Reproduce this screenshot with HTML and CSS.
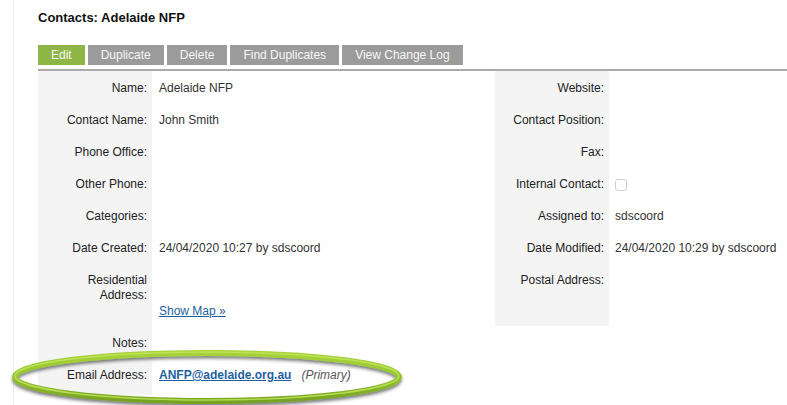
FILE: index.html
```html
<!DOCTYPE html>
<html lang="en">
<head>
<meta charset="utf-8">
<title>Contacts: Adelaide NFP</title>
<link rel="stylesheet" href="styles.css">
</head>
<body>
<div class="page">
  <div class="frame">
    <h1 class="title">Contacts: Adelaide NFP</h1>
    <div class="toolbar">
      <span class="btn btn-edit">Edit</span>
      <span class="btn">Duplicate</span>
      <span class="btn">Delete</span>
      <span class="btn">Find Duplicates</span>
      <span class="btn">View Change Log</span>
    </div>
    <table class="details">
      <colgroup>
        <col class="c-label"><col class="c-value"><col class="c-label"><col>
      </colgroup>
      <tr>
        <td class="label">Name:</td><td class="value">Adelaide NFP</td>
        <td class="label">Website:</td><td class="value value-r"></td>
      </tr>
      <tr>
        <td class="label">Contact Name:</td><td class="value">John Smith</td>
        <td class="label">Contact Position:</td><td class="value value-r"></td>
      </tr>
      <tr>
        <td class="label">Phone Office:</td><td class="value"></td>
        <td class="label">Fax:</td><td class="value value-r"></td>
      </tr>
      <tr>
        <td class="label">Other Phone:</td><td class="value"></td>
        <td class="label">Internal Contact:</td><td class="value value-r"><span class="checkbox"></span></td>
      </tr>
      <tr>
        <td class="label">Categories:</td><td class="value"></td>
        <td class="label">Assigned to:</td><td class="value value-r">sdscoord</td>
      </tr>
      <tr>
        <td class="label">Date Created:</td><td class="value">24/04/2020 10:27 by sdscoord</td>
        <td class="label">Date Modified:</td><td class="value value-r">24/04/2020 10:29 by sdscoord</td>
      </tr>
      <tr>
        <td class="label">Residential<br>Address:</td>
        <td class="value"><div class="address-lines"></div><a class="link" href="#">Show Map »</a></td>
        <td class="label">Postal Address:</td><td class="value value-r"></td>
      </tr>
      <tr>
        <td class="label">Notes:</td><td class="value"></td>
        <td colspan="2"></td>
      </tr>
      <tr class="last">
        <td class="label">Email Address:</td>
        <td class="value"><a class="link email" href="#">ANFP@adelaide.org.au</a><span class="primary">(Primary)</span></td>
        <td colspan="2"></td>
      </tr>
    </table>
  </div>
  <svg class="highlight" width="430" height="405" viewBox="0 0 430 405">
    <defs>
      <linearGradient id="ring" x1="0" y1="0" x2="0" y2="1">
        <stop offset="0" stop-color="#a8d23a"/>
        <stop offset="0.5" stop-color="#95c42f"/>
        <stop offset="1" stop-color="#76a321"/>
      </linearGradient>
      <filter id="shadow" x="-10%" y="-30%" width="120%" height="170%">
        <feDropShadow dx="0" dy="2.5" stdDeviation="1.5" flood-color="#2a2a2a" flood-opacity="0.6"/>
      </filter>
    </defs>
    <ellipse cx="207" cy="377" rx="192" ry="24" fill="none" stroke="url(#ring)" stroke-width="6" filter="url(#shadow)"/>
    <ellipse cx="207" cy="376" rx="192" ry="24" fill="none" stroke="#c2e65c" stroke-width="1.5" opacity="0.8"/>
  </svg>
</div>
</body>
</html>
```

FILE: styles.css
```css
html, body {
  margin: 0;
  padding: 0;
  background: #fff;
}

body {
  font-family: "Liberation Sans", Arial, Helvetica, sans-serif;
  color: #222;
}

.page {
  position: relative;
  width: 787px;
  height: 405px;
  overflow: hidden;
}

.frame {
  margin-left: 13px;
  border-left: 1px solid #ececec;
  padding-left: 24px;
  padding-top: 10px;
  height: 100%;
  box-sizing: border-box;
}

.title {
  margin: 0;
  font-size: 13px;
  line-height: 16px;
  font-weight: bold;
  color: #111;
}

.toolbar {
  display: flex;
  gap: 3px;
  margin-top: 19px;
  padding-bottom: 4px;
  border-bottom: 2px solid #ababab;
}

.btn {
  display: block;
  height: 20px;
  line-height: 20px;
  padding: 0 13px;
  font-size: 12px;
  color: #f7f7f7;
  background: #9b9b9b;
}

.btn-edit {
  background: #8db646;
}

.details {
  width: 100%;
  border-collapse: collapse;
  table-layout: fixed;
  font-size: 12px;
  line-height: 15px;
}

.c-label {
  width: 114px;
}

.c-value {
  width: 343px;
}

.details td {
  padding: 10px 0 7px;
  vertical-align: top;
}

.details td.label {
  background: #f4f4f4;
  text-align: right;
  padding-right: 5px;
  padding-left: 5px;
  color: #222;
}

.details td.value {
  padding-left: 7px;
  color: #333;
  white-space: nowrap;
}

.details td.value-r {
  padding-left: 6px;
}

.details tr.last td.label {
  padding-bottom: 12px;
}

.address-lines {
  height: 31px;
}

.link {
  color: #1e5f9f;
  text-decoration: underline;
}

.email {
  font-weight: bold;
}

.primary {
  font-style: italic;
  color: #555;
  margin-left: 10px;
}

.checkbox {
  display: block;
  margin-top: 2px;
  width: 10px;
  height: 10px;
  border: 1px solid #cfcfcf;
  border-radius: 3px;
  background: #fff;
}

.highlight {
  position: absolute;
  left: 0;
  top: 0;
  pointer-events: none;
}
```
